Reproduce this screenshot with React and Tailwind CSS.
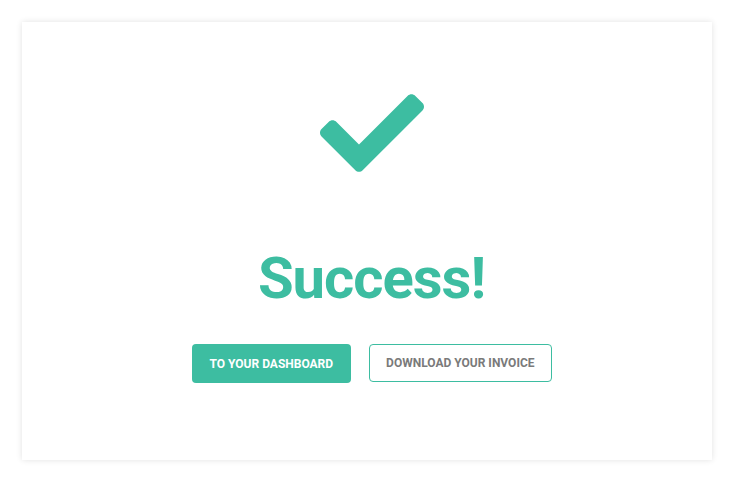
import React from "react";

export default function App() {
  return (
    <div className="min-h-[483px] w-[734px] bg-white pt-[22px] pl-[22px]" style={{ fontFamily: "Roboto, 'Liberation Sans', sans-serif" }}>
      <div className="flex h-[438px] w-[690px] flex-col items-center bg-white pt-[59px] pl-[9px] shadow-[0_0_6px_rgba(0,0,0,0.12)]">
        <svg viewBox="0 0 512 512" width="104" height="104" fill="#3dbda1">
          <path d="M173.898 439.404l-166.4-166.4c-9.997-9.997-9.997-26.206 0-36.204l36.203-36.204c9.997-9.998 26.207-9.998 36.204 0L192 312.69 432.095 72.596c9.997-9.997 26.207-9.997 36.204 0l36.203 36.204c9.997 9.997 9.997 26.206 0 36.204l-294.4 294.401c-9.998 9.997-26.207 9.997-36.204-.001z" />
        </svg>
        <h1 className="mt-[58px] text-[58px] font-bold leading-[70px] tracking-[-1px] text-[#3dbda1]">Success!</h1>
        <div className="mt-[31px] flex gap-[18px]">
          <button className="flex h-[39px] items-center rounded-[4px] bg-[#3dbda1] px-[18px] text-[12px] font-bold uppercase text-white">
            To your dashboard
          </button>
          <button className="flex h-[38px] items-center rounded-[4px] border border-[#3dbda1] bg-white px-[16px] text-[12px] font-bold uppercase text-[#7a7a7a]">
            Download your invoice
          </button>
        </div>
      </div>
    </div>
  );
}
